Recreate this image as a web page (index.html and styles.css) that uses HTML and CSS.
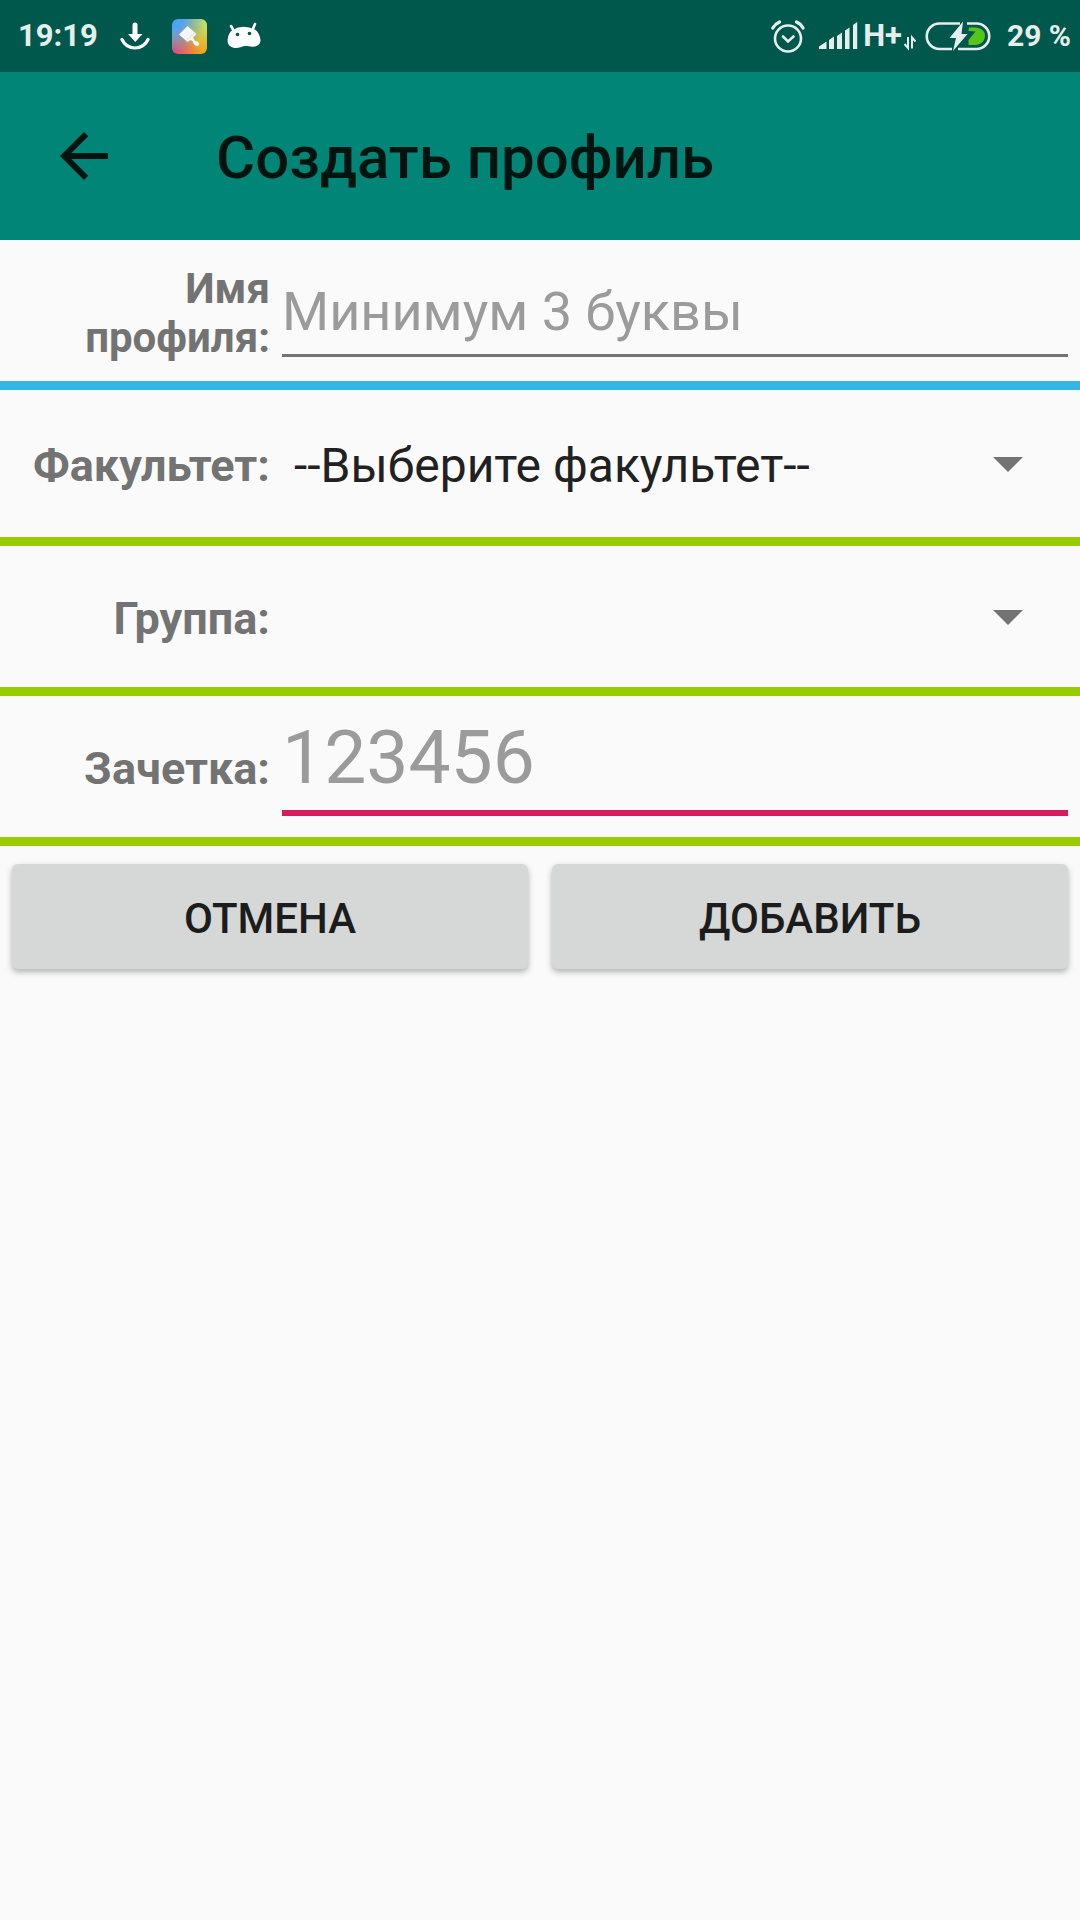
FILE: index.html
```html
<!DOCTYPE html>
<html lang="ru">
<head>
<meta charset="utf-8">
<meta name="viewport" content="width=device-width, initial-scale=1">
<title>Создать профиль</title>
<link rel="stylesheet" href="styles.css">
</head>
<body>
<div class="status-bar">
  <div class="status-left">
    <span class="clock">19:19</span>
    <svg class="icon-download" width="30" height="36" viewBox="0 0 30 36" aria-hidden="true">
      <path d="M15 7V17" stroke="#fff" stroke-width="5" stroke-linecap="round"/>
      <path d="M8 16h14.500l-7.200 8z" fill="#fff"/>
      <path d="M2 21.500Q6 30 15 30T28 21.500" fill="none" stroke="#fff" stroke-width="3.200" stroke-linecap="round"/>
    </svg>
    <span class="icon-theme">
      <svg width="35" height="35" viewBox="0 0 35 35" aria-hidden="true">
        <path d="M15.500 7L7 15.500l8.500 7.500 3-2 2.500 1.500c0 2.500 2 4.500 5 4.700l1.300-2.200c-.8-2-1.800-3-4.300-3L21 18.500l3.500-3.500z" fill="#f5f5f5"/>
        <path d="M15 20.500l8-7" stroke="#ddd" stroke-width="1"/>
      </svg>
    </span>
    <svg class="icon-android" width="34" height="36" viewBox="0 0 34 36" aria-hidden="true">
      <path d="M4 8l3.500 6M28 6l-2.500 6" stroke="#fff" stroke-width="2.600" stroke-linecap="round"/>
      <path d="M5.500 12Q16 6 28 11.500c3 2 5.500 7 5.500 11 0 4-4 6.500-8 6.200-3.500-.2-5-1-8-.7-3 .5-6 2.500-10 2-5-.8-7.500-4-6.800-9 .5-4 2.300-7.500 4.800-9z" fill="#fff"/>
      <circle cx="10.500" cy="16.500" r="1.800" fill="#00574b"/><circle cx="22.500" cy="15.500" r="1.800" fill="#00574b"/>
    </svg>
  </div>
  <div class="status-right">
    <svg class="icon-alarm" width="34" height="36" viewBox="0 0 34 36" fill="none" stroke="#e5eeed" aria-hidden="true">
      <circle cx="17" cy="20.500" r="13" stroke-width="2.600"/>
      <path d="M12 18.500l5 5 5.500-5" stroke-width="2.600" stroke-linecap="round"/>
      <path d="M1.800 10Q4 6 8.500 4M25.500 4Q30 6 32 10" stroke-width="3.200" stroke-linecap="round"/>
    </svg>
    <svg class="icon-signal" width="40" height="36" viewBox="0 0 40 36" fill="#e5eeed" aria-hidden="true">
      <path d="M1 31v-2.500l7.500-5V31zM11 31V22l5-3.500V31zM19 31V18l5-3.500V31zM27 31V12.500l4.500-3V31zM35 31V7l4.200-3V31z"/>
    </svg>
    <span class="network">H+</span>
    <svg class="icon-data" width="12" height="36" viewBox="0 0 12 36" fill="none" stroke="#e5eeed" stroke-width="2" aria-hidden="true">
      <path d="M4 19v11L.500 26M8 30.500v-11l3.500 4"/>
    </svg>
    <svg class="icon-battery" width="66" height="36" viewBox="0 0 66 36" aria-hidden="true">
      <path d="M35 5.500H14.500a12.500 12.500 0 0 0 0 25.500H27M42 5.500h9.500a12.500 12.500 0 0 1 0 25.500H33" fill="none" stroke="#e5eeed" stroke-width="2.600"/>
      <path d="M44 9.500h7q9 1 9 8.500t-9 9h-7.500v-5l7-8.500-7-.5z" fill="#56c516"/>
      <path d="M38 3.500L24.500 20h6.500L28 33l14.500-17H36.500z" fill="#e5eeed"/>
    </svg>
    <span class="charge">29 %</span>
  </div>
</div>

<header class="app-bar">
  <button class="back" type="button" aria-label="Назад">
    <svg width="72" height="72" viewBox="0 0 24 24" aria-hidden="true"><path d="M20 11H7.830l5.590-5.590L12 4l-8 8 8 8 1.410-1.410L7.830 13H20v-2z" fill="#00140f"/></svg>
  </button>
  <h1>Создать профиль</h1>
</header>

<main>
  <form>
    <div class="row row-name">
      <label for="name">Имя профиля:</label>
      <input id="name" class="field" type="text" placeholder="Минимум 3 буквы">
    </div>
    <div class="row row-faculty">
      <label for="faculty">Факультет:</label>
      <div class="spinner">
        <select id="faculty"><option>--Выберите факультет--</option></select>
      </div>
    </div>
    <div class="row">
      <label for="group">Группа:</label>
      <div class="spinner">
        <select id="group"><option></option></select>
      </div>
    </div>
    <div class="row">
      <label for="record">Зачетка:</label>
      <input id="record" class="field field-active" type="text" inputmode="numeric" placeholder="123456">
    </div>
    <div class="actions">
      <button type="button">ОТМЕНА</button>
      <button type="submit">ДОБАВИТЬ</button>
    </div>
  </form>
</main>
</body>
</html>
```
FILE: styles.css
```css
* {
  box-sizing: border-box;
}

body {
  margin: 0;
  min-height: 100vh;
  background: #fafafa;
  color: #212121;
  font-family: Roboto, "Noto Sans", sans-serif;
}

svg {
  display: block;
  flex: none;
}

/* System status bar */
.status-bar {
  display: flex;
  justify-content: space-between;
  height: 72px;
  padding: 0 9px 0 18px;
  background: #00574b;
  color: #e5eeed;
  font-size: 31px;
  font-weight: 700;
  line-height: 72px;
  white-space: nowrap;
}

.status-left,
.status-right {
  display: flex;
  align-items: center;
}

.icon-download {
  margin-left: 22px;
}

.icon-theme {
  margin-left: 22px;
  border-radius: 6px;
  background:
    radial-gradient(circle at 0 0, #4ea3f5 20%, transparent 70%),
    radial-gradient(circle at 100% 0, #c5e560 10%, transparent 65%),
    radial-gradient(circle at 0 100%, #e0507a 10%, transparent 60%),
    #f2a51e;
}

.icon-android {
  margin-left: 20px;
}

.icon-signal {
  margin-left: 13px;
}

.network {
  margin-left: 5px;
}

.icon-data {
  margin-left: 2px;
}

.icon-battery {
  margin-left: 9px;
}

.charge {
  margin-left: 16px;
  font-size: 30px;
}

/* Title bar */
.app-bar {
  display: flex;
  align-items: center;
  height: 168px;
  background: #008577;
  color: #00140f;
}

.back {
  display: flex;
  align-items: center;
  justify-content: center;
  width: 168px;
  height: 168px;
  padding: 0;
  border: 0;
  background: none;
}

h1 {
  margin: 0 0 0 48px;
  padding-top: 4px;
  font-size: 60px;
  font-weight: 500;
  line-height: 72px;
}

/* Form rows */
.row {
  display: grid;
  grid-template-columns: minmax(0, 1fr) minmax(0, 3fr);
  align-items: center;
  min-height: 150px;
  border-bottom: 9px solid #99cc00;
}

.row-name {
  border-bottom-color: #33b5e5;
}

.row-faculty {
  min-height: 156px;
}

label {
  padding-top: 4px;
  color: #737373;
  font-size: 45px;
  font-weight: 700;
  line-height: 54px;
  text-align: right;
}

.row-name label {
  font-size: 42px;
  line-height: 49px;
}

.field {
  align-self: end;
  height: 88px;
  margin: 0 12px 24px;
  padding: 0;
  border: 0;
  border-bottom: 3px solid #737373;
  border-radius: 0;
  outline: 0;
  background: none;
  color: #212121;
  font: 400 54px/64px Roboto, "Noto Sans", sans-serif;
}

.field::placeholder {
  color: #9b9b9b;
  opacity: 1;
}

.field-active {
  height: 112px;
  margin-bottom: 21px;
  border-bottom: 6px solid #d81b60;
  font-size: 75px;
  line-height: 88px;
}

.spinner {
  display: grid;
  align-items: center;
}

.spinner select {
  grid-area: 1 / 1;
  height: 72px;
  padding: 4px 72px 0 24px;
  border: 0;
  appearance: none;
  background: none;
  color: #212121;
  font: 400 48px/56px Roboto, "Noto Sans", sans-serif;
}

.spinner::after {
  content: "";
  grid-area: 1 / 1;
  justify-self: end;
  width: 30px;
  height: 15px;
  margin: 2px 57px 0 0;
  background: #737373;
  clip-path: polygon(0 0, 100% 0, 50% 100%);
  pointer-events: none;
}

/* Action buttons */
.actions {
  display: grid;
  grid-template-columns: 1fr 1fr;
  gap: 24px;
  padding: 18px 12px;
}

.actions button {
  height: 105px;
  padding: 4px 0 0;
  border: 0;
  border-radius: 6px;
  background: #d6d7d7;
  box-shadow: 0 3px 6px rgba(0, 0, 0, 0.3);
  color: #1c1c1c;
  font: 500 42px/49px Roboto, "Noto Sans", sans-serif;
}
```
